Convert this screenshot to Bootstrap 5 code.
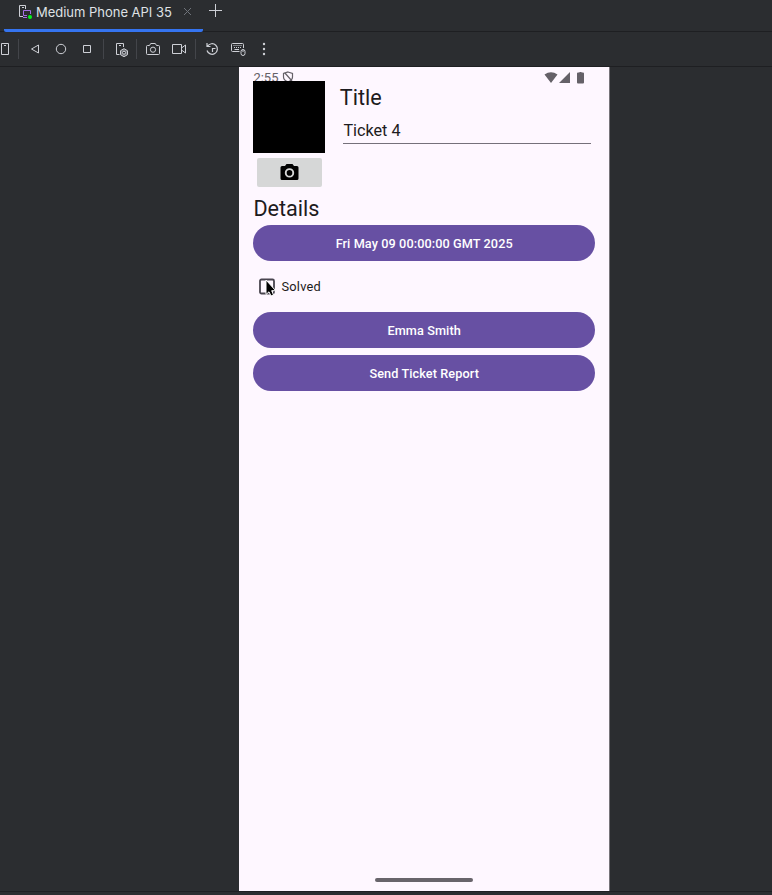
<!DOCTYPE html>
<html lang="en">
<head>
<meta charset="utf-8">
<meta name="viewport" content="width=device-width, initial-scale=1">
<title>Medium Phone API 35</title>
<link href="https://cdn.jsdelivr.net/npm/bootstrap@5.3.0/dist/css/bootstrap.min.css" rel="stylesheet">
<style>
body{background:#2b2d30;height:895px;overflow:hidden;font-family:Inter,"Liberation Sans",sans-serif}
svg{display:block;flex:none}
.tabs-bar{height:32px;border-bottom:1px solid #1e1f22;padding-left:4px}
.device-tab{width:199px;height:32px;padding:0 11px 6px 14px;border-bottom:3px solid #3574f0;border-radius:0 0 2px 2px;color:#dfe1e5;font-size:13px;line-height:20px}
.tab-label{width:136px;white-space:nowrap;letter-spacing:-.02px}
.tool-bar{height:35px;border-bottom:1px solid #1e1f22;color:#ced0d6;margin-left:-11px;padding-left:0}
.tool-bar button{all:unset;width:26px;height:20px;flex:none}
.tool-bar svg{overflow:visible;fill:none;stroke:currentColor;stroke-width:1}
.sep{width:1px;height:20px;background:#43454a;margin:0 3px;flex:none}
.phone{width:371px;height:824px;margin-left:239px;background:#fef7ff;border-right:1px solid #77747a;color:#1d1b20;font-family:Roboto,sans-serif;padding:0 14px 0 14.400px}
.status{height:14px;color:#656168;font-size:13px;line-height:22px;overflow:visible}
.photo{width:72px;height:72px;background:#000;margin-top:.4px}
.cam-btn{width:65px;height:28.600px;margin:5px 0 0 3.600px;background:#d6d7d7;border:0;border-radius:2px;padding:0 0 2px}
.form-side{margin-left:14.400px;width:252px}
.head{font-size:21.600px;line-height:32px;margin:0;font-weight:400}
.form-side .head{padding-top:1px}
.title-input{all:unset;display:block;margin:3px 0 0 3.600px;width:248px;height:27px;box-sizing:border-box;border-bottom:1px solid #75707a;font-size:16.200px;line-height:26px;padding-top:1px}
.details{margin-top:6px}
.pill{display:block;width:341.600px;height:36.500px;border:0;border-radius:19px;background:#6750a3;color:#fff;font-size:12.700px;font-weight:500;letter-spacing:.09px;padding:1px 0 0;line-height:36px}
.pill + .pill{margin-top:6.500px}
.solved{height:50.400px;padding-left:6.100px;font-size:12.800px;letter-spacing:.22px}
.home-line{width:98px;height:4px;border-radius:2px;background:#68646b;margin:0 auto 9px}
.foot{height:4px;border-top:1px solid #1e1f22}
</style>
</head>
<body class="d-flex flex-column">
<header class="tabs-bar d-flex">
  <div class="device-tab d-flex align-items-center">
    <svg width="18" height="20" viewBox="0 0 18 20" fill="none">
      <path d="M5 14.500H1.500V3.500H7.500V7" stroke="#ced0d6"/><path d="M4 5.500H6" stroke="#ced0d6"/>
      <path d="M9 13.500H5.500V8.500H12.500V12M5 15.500H9" stroke="#a571e6"/>
      <circle cx="12" cy="15" r="2" fill="#00f51a"/>
    </svg>
    <span class="tab-label">Medium Phone API 35</span>
    <svg class="ms-auto" width="9" height="9" viewBox="0 0 9 9" stroke="#6f737a"><path d="M1 1L8 8M8 1L1 8"/></svg>
  </div>
  <svg width="26" height="24" viewBox="0 0 26 24" stroke="#ced0d6"><path d="M6 10.500H19M12.500 4V17"/></svg>
</header>
<nav class="tool-bar d-flex align-items-center" aria-label="Emulator controls">
  <button aria-label="Device"><svg width="26" height="20"><path d="M12.500 4.500H19.500V15.500H12.500ZM15 6.500H17"/></svg></button>
  <i class="sep"></i>
  <button aria-label="Back"><svg width="26" height="20"><path d="M9.500 10L16.500 6V14Z"/></svg></button>
  <button aria-label="Home"><svg width="26" height="20"><circle cx="13" cy="10" r="4.700"/></svg></button>
  <button aria-label="Overview"><svg width="26" height="20"><path d="M9.500 6.500H16.500V13.500H9.500Z"/></svg></button>
  <i class="sep"></i>
  <button aria-label="Device settings"><svg width="26" height="20"><path d="M12.500 15.500H9.500V4.500H16.500V8M12 6.500H14"/><path d="M17 9.700L20.500 11.700V15.700L17 17.700L13.500 15.700V11.700Z" fill="#6c6e73"/><circle cx="17" cy="13.700" r="1.500" fill="#2b2d30"/></svg></button>
  <i class="sep"></i>
  <button aria-label="Screenshot"><svg width="26" height="20"><path d="M7.500 6.500H9.500L10.700 4.500H15.300L16.500 6.500H18.500Q19.500 6.500 19.500 7.500V14.500Q19.500 15.500 18.500 15.500H7.500Q6.500 15.500 6.500 14.500V7.500Q6.500 6.500 7.500 6.500Z"/><circle cx="13" cy="10.700" r="2.600"/></svg></button>
  <button aria-label="Record"><svg width="26" height="20"><path d="M6.500 5.500H15.500V14.500H6.500ZM15.500 9L19.500 6V14L15.500 11"/></svg></button>
  <i class="sep"></i>
  <button aria-label="Snapshots"><svg width="26" height="20"><path d="M8.500 7.300A5.300 5.300 0 1 1 8 11.500M8 4V7.500H11.500M13.500 13V9.500H16.500" stroke-width="1.200"/></svg></button>
  <button aria-label="Keyboard"><svg width="26" height="20"><path d="M14.500 12.500H7.500Q6.500 12.500 6.500 11.500V5.500Q6.500 4.500 7.500 4.500H17.500Q18.500 4.500 18.500 5.500V9"/><path d="M8.500 6.500H17M9 8.500H16" stroke-dasharray="1 1"/><path d="M9.500 10.500H14"/><rect x="16" y="10.500" width="4" height="6" rx="2"/><path d="M18 11V13"/></svg></button>
  <button aria-label="More"><svg width="26" height="20"><g fill="currentColor" stroke="none"><circle cx="13" cy="5" r="1.200"/><circle cx="13" cy="10" r="1.200"/><circle cx="13" cy="15" r="1.200"/></g></svg></button>
</nav>
<main class="phone d-flex flex-column">
  <div class="status d-flex">
    <span>2:55</span>
    <svg class="ms-1" width="12" height="15" viewBox="0 0 12 15" fill="none" stroke="currentColor" stroke-width="1.200"><path d="M6 5L10.500 6.500V10C10.500 12.500 8.500 14 6 15C3.500 14 1.500 12.500 1.500 10V6.500ZM2.500 5.500L10 14"/></svg>
    <svg class="ms-auto" width="51" height="18" viewBox="0 0 51 18" fill="currentColor"><path d="M0.500 7.500Q7 3 13.500 7.500L7 16ZM15 16L26 5V16ZM34 5.500H35.500V5H37.500V5.500H39Q40 5.500 40 6.500V15.500Q40 16.500 39 16.500H34Q33 16.500 33 15.500V6.500Q33 5.500 34 5.500Z"/></svg>
  </div>
  <div class="d-flex">
    <div>
      <div class="photo"></div>
      <button class="cam-btn d-flex align-items-center justify-content-center" aria-label="Take photo"><svg width="20" height="18" viewBox="0 0 20 18"><path fill="#000" fill-rule="evenodd" d="M7.500 1H13.500L15 3H18Q19.500 3 19.500 4.500V15.500Q19.500 17 18 17H3Q1.500 17 1.500 15.500V4.500Q1.500 3 3 3H6ZM10.500 5.200A4.700 4.700 0 1 0 10.500 14.600A4.700 4.700 0 1 0 10.500 5.200ZM10.500 7.100A2.800 2.800 0 1 1 10.500 12.700A2.800 2.800 0 1 1 10.500 7.100Z"/></svg></button>
    </div>
    <div class="form-side">
      <h1 class="head">Title</h1>
      <input class="title-input" value="Ticket 4" aria-label="Title">
    </div>
  </div>
  <h2 class="head details">Details</h2>
  <button class="pill">Fri May 09 00:00:00 GMT 2025</button>
  <label class="solved d-flex align-items-center">
    <svg width="22" height="22" viewBox="0 0 22 22"><rect x="1" y="3.500" width="14" height="14" rx="1.500" fill="none" stroke="#49454f" stroke-width="1.800"/><path d="M7 4V18.500L10 15.800L12 20L14.500 19L12.700 14.700H16.700Z" fill="#000" stroke="#fff" stroke-width="1"/></svg>
    <span>Solved</span>
  </label>
  <button class="pill">Emma Smith</button>
  <button class="pill">Send Ticket Report</button>
  <div class="home-line mt-auto"></div>
</main>
<footer class="foot"></footer>
<script src="https://cdn.jsdelivr.net/npm/bootstrap@5.3.0/dist/js/bootstrap.bundle.min.js"></script>
</body>
</html>
